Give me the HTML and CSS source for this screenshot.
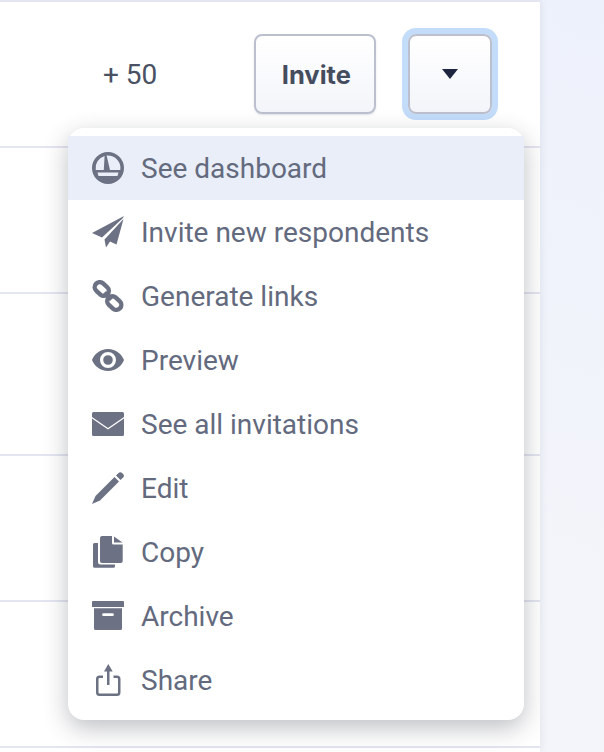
FILE: index.html
```html
<!DOCTYPE html>
<html lang="en">
<head>
    <meta charset="UTF-8">
    <meta name="viewport" content="width=device-width, initial-scale=1.0">
    <title>Surveys</title>
    <link rel="stylesheet" href="styles.css">
</head>
<body>
    <div class="panel">
        <div class="row row-first">
            <span class="count">+ 50</span>
            <button class="btn btn-invite">Invite</button>
            <button class="btn btn-toggle"><span class="caret"></span></button>
        </div>
        <div class="row"></div>
        <div class="row row-tall"></div>
        <div class="row"></div>
        <div class="row"></div>

        <ul class="menu">
            <li class="menu-item active">
                <svg class="icon" viewBox="0 0 32 32"><path fill-rule="evenodd" d="M16 0a16 16 0 1 1 0 32a16 16 0 0 1 0-32zM3.7 18A12.500 12.500 0 0 1 12.600 4L11.800 18zM14.600 3.600A12.500 12.500 0 0 1 28.300 18H18zM5.500 20.600H26.500L25.500 24H6.500z"/></svg>
                See dashboard
            </li>
            <li class="menu-item">
                <svg class="icon" viewBox="0 0 32 32"><path d="M32 0L0 17 10 21.500 30.500 2.500zM31.500 3L12.500 23.500 14 31.500 18 25.500 24.500 28.500z"/></svg>
                Invite new respondents
            </li>
            <li class="menu-item">
                <svg class="icon" viewBox="0 0 32 32"><g fill="none" stroke-width="4.400"><rect x="2" y="4" width="15.500" height="10" rx="5" transform="rotate(42 9.750 9)"/><rect x="14.500" y="18" width="15.500" height="10" rx="5" transform="rotate(42 22.250 23)"/><path d="M12.500 12.500L19.500 19.500"/></g></svg>
                Generate links
            </li>
            <li class="menu-item">
                <svg class="icon" viewBox="0 0 32 32"><path fill-rule="evenodd" d="M16 5C24 5 30 10.500 32 16 30 21.500 24 27 16 27S2 21.500 0 16C2 10.500 8 5 16 5zM16 8a8 8 0 1 0 0 16a8 8 0 0 0 0-16zM16 11.200a4.800 4.800 0 1 1 0 9.600a4.800 4.800 0 0 1 0-9.600z"/></svg>
                Preview
            </li>
            <li class="menu-item">
                <svg class="icon" viewBox="0 0 32 32"><path d="M1.500 4H30.500A1.500 1.500 0 0 1 32 5.500V9L16 20 0 9V5.500A1.500 1.500 0 0 1 1.500 4zM0 10.500L16 21.500 32 10.500V26.500A1.500 1.500 0 0 1 30.500 28H1.500A1.500 1.500 0 0 1 0 26.500z"/></svg>
                See all invitations
            </li>
            <li class="menu-item">
                <svg class="icon" viewBox="0 0 32 32"><path d="M24 3.500L26.500 1a2.600 2.600 0 0 1 3.600 0l1 1a2.600 2.600 0 0 1 0 3.600L28.500 8zM22.500 5L27 9.500 8 28.500 0 32 3.500 24z"/></svg>
                Edit
            </li>
            <li class="menu-item">
                <svg class="icon" viewBox="0 0 32 32"><path d="M10 0H20V7A1.500 1.500 0 0 0 21.500 8.500H30.700V25A2 2 0 0 1 28.700 27H10A2 2 0 0 1 8 25V2A2 2 0 0 1 10 0zM22 .5L30.500 6.500H22zM2.500 7H6V26A2.500 2.500 0 0 0 8.500 28.500H23V30.300A1.500 1.500 0 0 1 21.500 31.800H2.500A1.500 1.500 0 0 1 1 30.300V8.500A1.500 1.500 0 0 1 2.500 7z"/></svg>
                Copy
            </li>
            <li class="menu-item">
                <svg class="icon" viewBox="0 0 32 32"><path fill-rule="evenodd" d="M1 1H31A1 1 0 0 1 32 2V7H0V2A1 1 0 0 1 1 1zM2 8.300H30V28.500A1.500 1.500 0 0 1 28.500 30H3.500A1.500 1.500 0 0 1 2 28.500zM11.500 13.300A1.300 1.300 0 0 0 11.500 16H20.500A1.300 1.300 0 0 0 20.500 13.300z"/></svg>
                Archive
            </li>
            <li class="menu-item">
                <svg class="icon" viewBox="0 0 32 32"><path d="M16.300 0L20.700 7.500H17.500V21H15V7.500H12zM11 11.500V14H7.500A1 1 0 0 0 6.500 15V28.500A1 1 0 0 0 7.500 29.500H25A1 1 0 0 0 26 28.500V15A1 1 0 0 0 25 14H21.500V11.500H25A3.500 3.500 0 0 1 28.500 15V28.500A3.500 3.500 0 0 1 25 32H7.500A3.500 3.500 0 0 1 4 28.500V15A3.500 3.500 0 0 1 7.500 11.500z"/></svg>
                Share
            </li>
        </ul>
    </div>
</body>
</html>
```

FILE: styles.css
```css
html, body {
    height: 100%;
}
body {
    margin: 0;
    overflow: hidden;
    font-family: Roboto, Arial, sans-serif;
    background: linear-gradient(200deg, #edf1fb 0%, #f4f5fa 70%);
}
.panel {
    position: relative;
    width: 540px;
    height: 752px;
    overflow: hidden;
    background-color: #fff;
    border-top: 2px solid #e3e5f0;
    box-sizing: border-box;
    box-shadow: 0 0 8px rgba(60, 70, 100, 0.12);
}
.row {
    height: 144px;
    border-bottom: 2px solid #e3e5f0;
}
.row-tall {
    height: 160px;
}
.row-first {
    display: flex;
    align-items: flex-start;
    padding-top: 32px;
    height: 112px;
}
.count {
    margin: 26px 97px 0 103px;
    font-size: 28px;
    line-height: 30px;
    color: #4a5163;
}
.btn {
    height: 80px;
    box-sizing: border-box;
    border: 2px solid #bcc0ce;
    border-radius: 8px;
    background: linear-gradient(#fff, #f3f5fa);
    box-shadow: 0 1px 2px rgba(60, 70, 100, 0.15);
    padding: 0;
}
.btn-invite {
    width: 122px;
    margin-right: 32px;
    padding-left: 2px;
    font-family: Inter, Arial, sans-serif;
    font-size: 25.5px;
    font-weight: 700;
    color: #454c5e;
}
.btn-toggle {
    display: flex;
    align-items: center;
    justify-content: center;
    width: 84px;
    box-shadow: 0 0 0 6px #c3dcfa;
}
.caret {
    width: 0;
    height: 0;
    border-left: 8px solid transparent;
    border-right: 8px solid transparent;
    border-top: 10px solid #1e2540;
}
.menu {
    position: absolute;
    left: 68px;
    top: 126px;
    width: 456px;
    margin: 0;
    padding: 8px 0;
    list-style: none;
    background-color: #fff;
    border-radius: 16px;
    box-shadow: 0 8px 24px rgba(40, 45, 60, 0.3);
}
.menu-item {
    display: flex;
    align-items: center;
    height: 64px;
    padding-left: 24px;
    font-size: 28px;
    color: #636a7e;
}
.menu-item.active {
    background-color: #e9eef8;
}
.icon {
    flex: none;
    width: 32px;
    height: 32px;
    margin-right: 17px;
    fill: #6c7284;
    stroke: #6c7284;
    stroke-width: 0;
}
```
